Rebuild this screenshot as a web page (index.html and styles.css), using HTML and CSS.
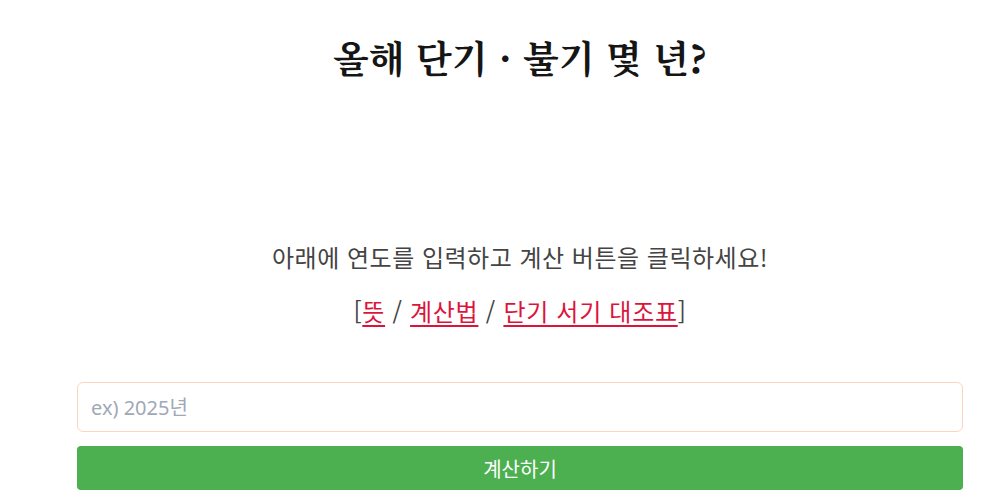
FILE: index.html
```html
<!DOCTYPE html>
<html lang="ko">
<head>
<meta charset="utf-8">
<title>올해 단기 · 불기 몇 년?</title>
<link rel="stylesheet" href="styles.css">
</head>
<body>
<main class="page">
  <h1 class="title">올해 단기 · 불기 몇 년?</h1>
  <section class="intro">
    <p class="lead">아래에 연도를 입력하고 계산 버튼을 클릭하세요!</p>
    <p class="links">[<a href="#">뜻</a> / <a href="#">계산법</a> / <a href="#">단기 서기 대조표</a>]</p>
  </section>
  <form class="calc">
    <input class="year" type="text" placeholder="ex) 2025년">
    <button class="btn" type="button">계산하기</button>
  </form>
</main>
</body>
</html>
```

FILE: styles.css
```css
* { box-sizing: border-box; }
html, body { margin: 0; padding: 0; background: #fff; }
body { font-family: "Noto Sans CJK KR", "Noto Sans", sans-serif; color: #333; }
.page {
  padding: 0 40px 0 77px;
  display: flex;
  flex-direction: column;
}
.title {
  margin: 29px 0 0;
  text-align: center;
  font-family: "Noto Serif CJK KR", "Nanum Myeongjo", "Liberation Serif", "Noto Sans CJK KR", serif;
  font-weight: 700;
  font-size: 37px;
  line-height: 56px;
  color: #151515;
}
.intro {
  margin-top: 157px;
  text-align: center;
}
.lead, .links {
  margin: 0;
  font-size: 24px;
  letter-spacing: 0.5px;
  line-height: 30px;
  color: #444;
  font-weight: 400;
}
.links { margin-top: 24px; letter-spacing: 0.7px; }
.links a { color: #dc143c; text-decoration: underline; text-underline-offset: 4px; }
.calc {
  margin-top: 56px;
  display: flex;
  flex-direction: column;
  gap: 14px;
}
.year {
  height: 50px;
  border: 1px solid #ffd3c2;
  border-radius: 6px;
  padding: 0 13px;
  font-family: "Noto Sans", "Noto Sans CJK KR", sans-serif;
  font-size: 20px;
  color: #333;
  outline: none;
}
.year::placeholder { color: #a0a8b8; }
.btn {
  height: 44px;
  border: 0;
  border-radius: 4px;
  background: #4caf50;
  color: #fff;
  font-family: "Noto Sans CJK KR", sans-serif;
  font-size: 20px;
}
```
